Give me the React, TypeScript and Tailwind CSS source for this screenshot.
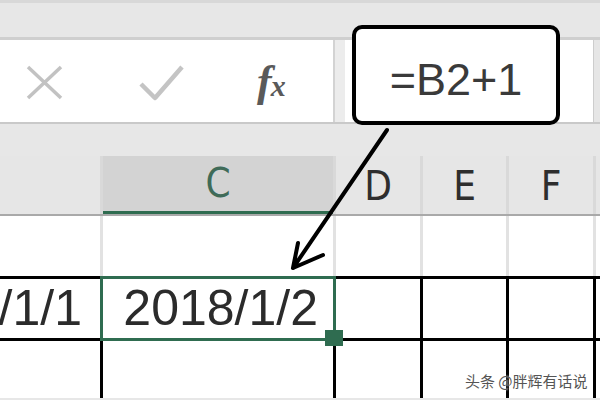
import React from "react";

const cols = "grid grid-cols-[100px_230px_84px_83px_84px_4px] gap-x-[3px]";

function Toolbar() {
  return (
    <div className="flex h-[84px] border-b-2 border-[#c9c9c9]">
      <div className="relative w-[333px] bg-white">
        <svg className="absolute left-[24px] top-[24px]" width="40" height="36" viewBox="0 0 40 36">
          <path d="M4 3 L37 34 M37 3 L4 34" stroke="#c2c2c2" strokeWidth="3.5" fill="none" />
        </svg>
        <svg className="absolute left-[137px] top-[24px]" width="48" height="38" viewBox="0 0 48 38">
          <path d="M4 20 L18 34 L45 3" stroke="#c4c4c4" strokeWidth="4.5" fill="none" strokeLinejoin="round" />
        </svg>
        <div className="absolute left-[257px] top-[20px] flex items-baseline font-['Liberation_Serif',serif] italic font-bold text-[#5a5a5a]">
          <span className="text-[44px] leading-none">f</span>
          <span className="-ml-[1px] text-[30px] leading-none">x</span>
        </div>
      </div>
      <div className="w-[12px] border-l-2 border-[#d3d3d3] bg-[#ececec]" />
      <div className="flex-1 bg-white" />
      <div className="w-[7px] border-l border-[#cdcdcd] bg-[#e6e6e6]" />
    </div>
  );
}

function Headers() {
  const base = "flex items-end justify-center pb-[8px] text-[40px] leading-none font-['DejaVu_Sans',sans-serif] font-stretch-condensed";
  return (
    <div className={`${cols} h-[60px] border-b-2 border-[#a9a9a9] bg-[#d9d9d9]`}>
      <div className={`${base} bg-[#e6e6e6]`} />
      <div className={`${base} bg-[#d3d3d3] border-b-[3px] border-[#2f6c50] pb-[5px] text-[#3f6b58]`}>C</div>
      <div className={`${base} bg-[#e6e6e6] text-[#2e2e2e]`}>D</div>
      <div className={`${base} bg-[#e6e6e6] text-[#2e2e2e]`}>E</div>
      <div className={`${base} bg-[#e6e6e6] text-[#2e2e2e]`}>F</div>
      <div className="bg-[#e6e6e6]" />
    </div>
  );
}

function Cell({ children, className = "" }: { children?: React.ReactNode; className?: string }) {
  return <div className={`relative flex items-center justify-end bg-white ${className}`}>{children}</div>;
}

export default function App() {
  return (
    <div className="relative h-[400px] w-[600px] overflow-hidden bg-[#e7e7e7] font-['Liberation_Sans',sans-serif]">
      <div className="h-[40px] border-t-[3px] border-b-[3px] border-t-[#d8d8d8] border-b-[#cfcfcf] bg-[#e7e7e7]" />
      <Toolbar />
      <div className="h-[32px]" />
      <Headers />
      <div className={`${cols} h-[60px] bg-[#e2e2e2]`}>
        <Cell />
        <Cell />
        <Cell />
        <Cell />
        <Cell />
        <Cell />
      </div>
      <div className={`${cols} gap-y-[3px] bg-black pt-[3px] grid-rows-[59px_57px]`}>
        <Cell className="pr-[18px] text-[50px] text-[#2b2b2b] overflow-hidden">
          <span className="whitespace-nowrap">2018/1/1</span>
        </Cell>
        <Cell className="z-10 pr-[15px] text-[50px] text-[#2b2b2b] bg-[#fbfdfc]">
          <span className="whitespace-nowrap">2018/1/2</span>
          <div className="absolute -inset-[3px] border-[3px] border-[#2f6c50]" />
          <div className="absolute -bottom-[8px] -right-[10px] h-4 w-[18px] bg-[#2f6c50]" />
        </Cell>
        <Cell />
        <Cell />
        <Cell />
        <Cell />
        <Cell />
        <Cell />
        <Cell />
        <Cell />
        <Cell />
        <Cell />
      </div>

      <div className="absolute left-[352px] top-[25px] flex h-[100px] w-[208px] items-center justify-center rounded-[10px] border-4 border-black bg-white pt-[10px] text-[45px] text-[#3a3a3a]">
        =B2+1
      </div>

      <svg className="pointer-events-none absolute inset-0 z-20" width="600" height="400" viewBox="0 0 600 400">
        <path d="M387 130 L293 268 M293 268 L298 243 M293 268 L323 255" stroke="#000" strokeWidth="4" strokeLinecap="round" fill="none" />
      </svg>

      <div className="absolute z-20 left-[465px] top-[370px] text-[15px] text-[#555] font-['Noto_Sans_CJK_SC',sans-serif] [text-shadow:0_0_2px_#fff]">
        头条 @胖辉有话说
      </div>
    </div>
  );
}
